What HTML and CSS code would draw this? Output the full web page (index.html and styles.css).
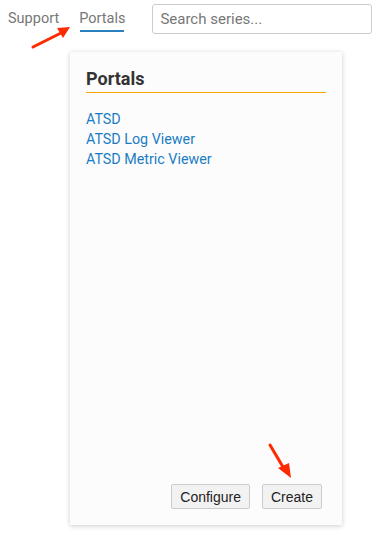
FILE: index.html
```html
<!DOCTYPE html>
<html>
<head>
<meta charset="utf-8">
<link rel="stylesheet" href="styles.css">
</head>
<body>
<header class="topbar">
  <a class="nav-item">Support</a>
  <a class="nav-item active">Portals</a>
  <input class="search" type="text" placeholder="Search series...">
</header>
<div class="panel">
  <h2 class="panel-title">Portals</h2>
  <ul class="portal-list">
    <li><a>ATSD</a></li>
    <li><a>ATSD Log Viewer</a></li>
    <li><a>ATSD Metric Viewer</a></li>
  </ul>
  <div class="actions">
    <button class="btn">Configure</button>
    <button class="btn">Create</button>
  </div>
</div>
<svg class="arrow arrow-nav" width="50" height="30" viewBox="0 0 50 30">
  <line x1="3" y1="25" x2="33" y2="10" stroke="#ff2a00" stroke-width="3" stroke-linecap="round"/>
  <polygon points="40,5 27,6 33,16" fill="#ff2a00"/>
</svg>
<svg class="arrow arrow-create" width="30" height="40" viewBox="0 0 30 40">
  <line x1="5" y1="5" x2="18" y2="27" stroke="#ff2a00" stroke-width="3" stroke-linecap="round"/>
  <polygon points="26,38 13,28 24,23" fill="#ff2a00"/>
</svg>
</body>
</html>
```
FILE: styles.css
```css
html, body {
  margin: 0;
  padding: 0;
  background: #ffffff;
}
body {
  width: 376px;
  height: 536px;
  position: relative;
  overflow: hidden;
  font-family: Roboto, "Noto Sans", sans-serif;
}
.topbar {
  display: flex;
  align-items: center;
  height: 38px;
  padding: 0 0 0 8px;
  box-sizing: border-box;
}
.nav-item {
  font-size: 14.5px;
  color: #777777;
  line-height: 20px;
  position: relative;
}
.nav-item + .nav-item {
  margin-left: 20px;
}
.nav-item.active::after {
  content: "";
  position: absolute;
  left: 1px;
  right: 1px;
  bottom: -3px;
  height: 2px;
  background: #2a7fc1;
}
.search {
  margin-left: 27px;
  width: 220px;
  height: 30px;
  box-sizing: border-box;
  border: 1px solid #cccccc;
  border-radius: 3px;
  padding: 0 7px;
  font-family: Roboto, "Noto Sans", sans-serif;
  font-size: 15px;
  color: #555555;
  margin-top: -1px;
}
.search::placeholder {
  color: #777777;
}
.panel {
  margin: 14px 0 0 70px;
  width: 272px;
  height: 473px;
  box-sizing: border-box;
  background: #fcfcfc;
  box-shadow: 0 1px 5px rgba(0, 0, 0, 0.2);
  padding: 15px 16px 16px 16px;
  display: flex;
  flex-direction: column;
}
.panel-title {
  margin: 0;
  font-size: 18px;
  font-weight: 700;
  color: #333333;
  line-height: 24px;
  padding-bottom: 1px;
  border-bottom: 1px solid #f5a800;
}
.portal-list {
  list-style: none;
  margin: 16px 0 0 0;
  padding: 0;
  font-size: 14.3px;
  line-height: 20px;
}
.portal-list a {
  color: #1a7cc4;
}
.actions {
  margin-top: auto;
  display: flex;
  justify-content: flex-end;
  gap: 12px;
  padding-right: 4px;
}
.btn {
  font-family: "Liberation Sans", Arial, sans-serif;
  font-size: 14px;
  color: #222222;
  background: #f2f2f2;
  border: 1px solid #cccccc;
  border-radius: 2px;
  height: 25px;
  padding: 0 8px;
}
.arrow {
  position: absolute;
}
.arrow-nav {
  left: 30px;
  top: 22px;
}
.arrow-create {
  left: 265px;
  top: 440px;
}
```
